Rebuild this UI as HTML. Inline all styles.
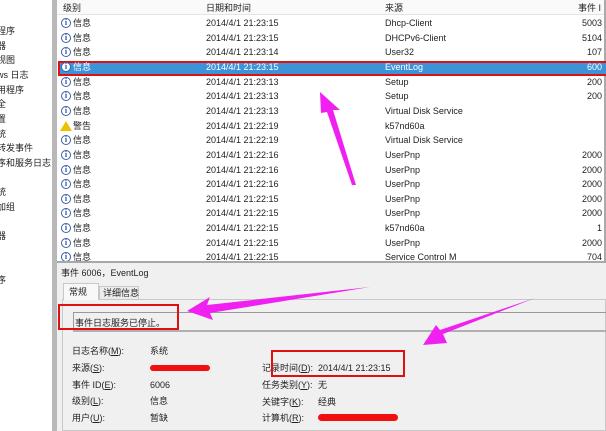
<!DOCTYPE html>
<html><head><meta charset="utf-8"><style>
*{margin:0;padding:0;box-sizing:border-box}
body{width:606px;height:431px;overflow:hidden;background:#fff;position:relative;font-family:"Liberation Sans","Noto Sans CJK SC",sans-serif;font-size:9px;line-height:12px;color:#222}
.a{position:absolute;white-space:nowrap}
.ico{position:absolute;width:10px;height:10px;border-radius:50%;border:1px solid #3a5fa8;background:#fff;font:bold 8px/8px "Liberation Serif",serif;color:#2a4fa0;text-align:center}
.warn{position:absolute;width:0;height:0;border-left:6px solid transparent;border-right:6px solid transparent;border-bottom:10px solid #f0c000}
.ln{height:16.8px;line-height:16.8px}
</style></head><body>
<div class="a" style="left:0;top:0;width:52px;height:431px;background:#fff;overflow:hidden">
<div style="position:absolute;left:-3px;top:24px;line-height:14.65px">程序<br>器<br>视图<br>ws 日志<br>用程序<br>全<br>置<br>统<br>转发事件<br>序和服务日志<br><br>统<br>加组<br><br>器<br><br><br>序</div></div>
<div class="a" style="left:52px;top:0;width:5px;height:431px;background:#b8b8b8"></div>
<div class="a" style="left:57px;top:0;width:547px;height:15px;background:#fafafa;border-bottom:1px solid #e4e4e4"></div>
<div class="a" style="left:63px;top:2px">级别</div>
<div class="a" style="left:206px;top:2px">日期和时间</div>
<div class="a" style="left:385px;top:2px">来源</div>
<div class="a" style="left:578px;top:2px">事件 I</div>
<div class="a" style="left:604px;top:0;width:2px;height:262px;background:#aaa"></div>
<div class="a" style="left:58px;top:61px;width:548px;height:15px;background:#3d93d8;border-top:2px solid #e01010;border-bottom:2px solid #e01010;border-left:2px solid #e01010"></div>
<div id="rows"></div>
<script>
var r=[["i","2014/4/1 21:23:15","Dhcp-Client","5003"],["i","2014/4/1 21:23:15","DHCPv6-Client","5104"],["i","2014/4/1 21:23:14","User32","107"],["i","2014/4/1 21:23:15","EventLog","600"],["i","2014/4/1 21:23:13","Setup","200"],["i","2014/4/1 21:23:13","Setup","200"],["i","2014/4/1 21:23:13","Virtual Disk Service",""],["w","2014/4/1 21:22:19","k57nd60a",""],["i","2014/4/1 21:22:19","Virtual Disk Service",""],["i","2014/4/1 21:22:16","UserPnp","2000"],["i","2014/4/1 21:22:16","UserPnp","2000"],["i","2014/4/1 21:22:16","UserPnp","2000"],["i","2014/4/1 21:22:15","UserPnp","2000"],["i","2014/4/1 21:22:15","UserPnp","2000"],["i","2014/4/1 21:22:15","k57nd60a","1"],["i","2014/4/1 21:22:15","UserPnp","2000"],["i","2014/4/1 21:22:15","Service Control M","704"]];
var h="";for(var i=0;i<r.length;i++){var y=18+i*14.65;var c=i==3?"color:#fff;":"";var t=y-1;
h+=(r[i][0]=="i"?'<div class="ico" style="left:61px;top:'+y+'px">i</div>':'<div class="warn" style="left:60px;top:'+y+'px"></div>');
h+='<div class="a" style="'+c+'left:73px;top:'+t+'px">'+(r[i][0]=="i"?"信息":"警告")+'</div>';
h+='<div class="a" style="'+c+'left:206px;top:'+t+'px">'+r[i][1]+'</div>';
h+='<div class="a" style="'+c+'left:385px;top:'+t+'px">'+r[i][2]+'</div>';
h+='<div class="a" style="'+c+'right:4px;top:'+t+'px">'+r[i][3]+'</div>';}
document.getElementById("rows").innerHTML=h;
</script>
<div class="a" style="left:57px;top:261px;width:549px;height:170px;background:#f0f0f0;border-top:2px solid #a8a8a8"></div>
<div class="a" style="left:61px;top:267px">事件 6006，EventLog</div>
<div class="a" style="left:62px;top:299px;width:544px;height:132px;border:1px solid #c8c8c8;background:#f0f0f0"></div>
<div class="a" style="left:63px;top:283px;width:36px;height:17px;background:#f8f8f8;border:1px solid #c8c8c8;border-bottom:none;padding:2px 0 0 5px">常规</div>
<div class="a" style="left:99px;top:286px;width:40px;height:14px;background:#ececec;border:1px solid #c8c8c8;padding:0 0 0 3px">详细信息</div>
<div class="a" style="left:73px;top:312px;width:533px;height:1px;background:#999"></div>
<div class="a" style="left:73px;top:312px;width:1px;height:18px;background:#999"></div>
<div class="a" style="left:73px;top:330px;width:533px;height:2px;background:#b0b0b0"></div>
<div class="a" style="left:75px;top:317px">事件日志服务已停止。</div>
<div class="a" style="left:58px;top:304px;width:121px;height:26px;border:2px solid #e01010"></div>
<div class="a" style="left:72px;top:343px"><div class="ln">日志名称(<u>M</u>):</div><div class="ln">来源(<u>S</u>):</div><div class="ln">事件 ID(<u>E</u>):</div><div class="ln">级别(<u>L</u>):</div><div class="ln">用户(<u>U</u>):</div></div>
<div class="a" style="left:150px;top:343px"><div class="ln">系统</div><div class="ln">&nbsp;</div><div class="ln">6006</div><div class="ln">信息</div><div class="ln">暂缺</div></div>
<div class="a" style="left:262px;top:360px"><div class="ln">记录时间(<u>D</u>):</div><div class="ln">任务类别(<u>Y</u>):</div><div class="ln">关键字(<u>K</u>):</div><div class="ln">计算机(<u>R</u>):</div></div>
<div class="a" style="left:318px;top:360px"><div class="ln">2014/4/1 21:23:15</div><div class="ln">无</div><div class="ln">经典</div></div>
<div class="a" style="left:271px;top:350px;width:134px;height:27px;border:2px solid #e01010"></div>
<div class="a" style="left:150px;top:365px;width:60px;height:6px;border-radius:3px;background:#f01010"></div>
<div class="a" style="left:318px;top:414px;width:80px;height:7px;border-radius:4px;background:#f01010"></div>
<svg class="a" style="left:0;top:0" width="606" height="431">
<polygon fill="#f020f0" points="320,92 340,110 333,110 356,185 352,185 327,112 321,113"/>
<polygon fill="#f020f0" points="187,311 210,297 207,305 370,287 210,313 213,320"/>
<polygon fill="#f020f0" points="423,345 436,325 440,330 535,298 443,334 447,343"/>
</svg>
</body></html>
